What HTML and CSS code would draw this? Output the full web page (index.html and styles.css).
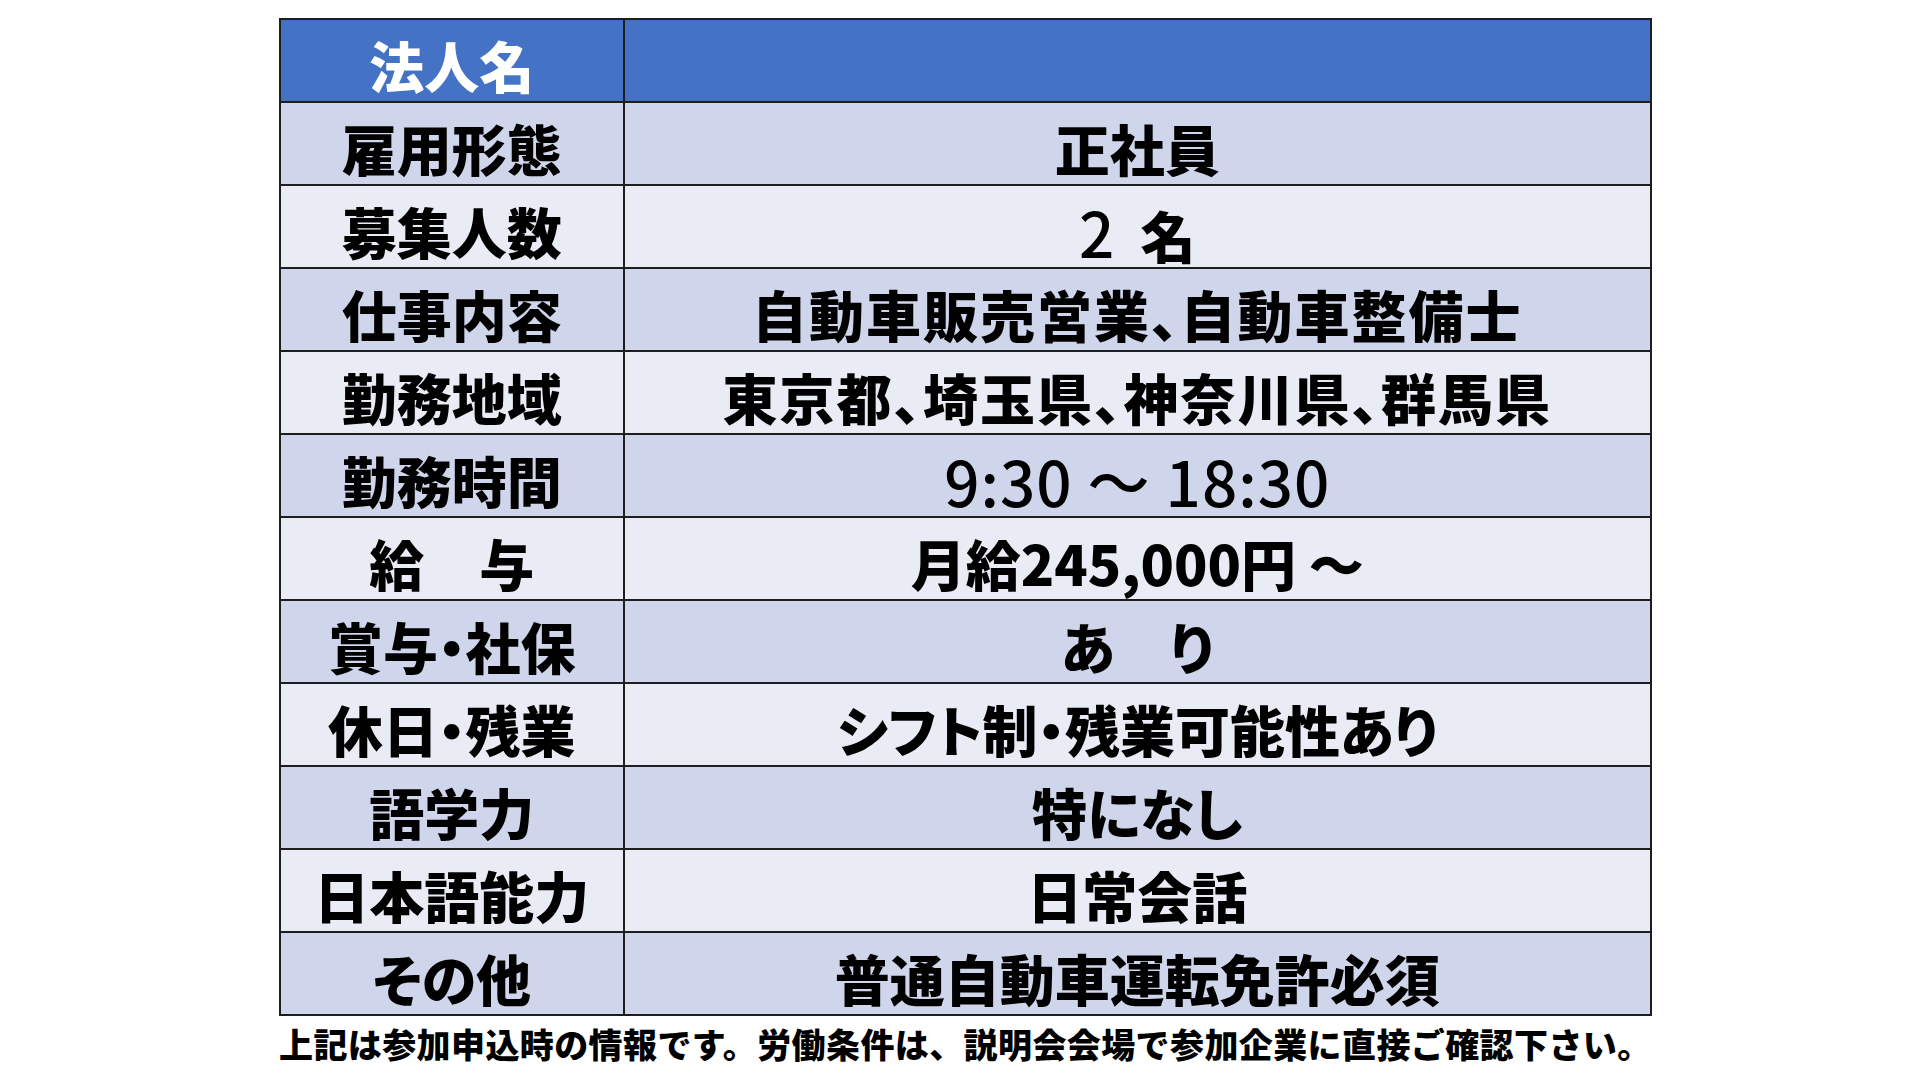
FILE: index.html
```html
<!DOCTYPE html>
<html lang="ja">
<head>
<meta charset="utf-8">
<title>求人情報</title>
<link rel="stylesheet" href="styles.css">
</head>
<body>
<main class="page">
  <table class="job">
    <tr class="head">
      <th class="label">法人名</th>
      <td class="value"></td>
    </tr>
    <tr class="dark">
      <th class="label">雇用形態</th>
      <td class="value">正社員</td>
    </tr>
    <tr class="light">
      <th class="label">募集人数</th>
      <td class="value"><span class="num">2</span>&nbsp;&nbsp;名</td>
    </tr>
    <tr class="dark">
      <th class="label">仕事内容</th>
      <td class="value spaced">自動車販売営業、自動車整備士</td>
    </tr>
    <tr class="light">
      <th class="label">勤務地域</th>
      <td class="value spaced">東京都、埼玉県、神奈川県、群馬県</td>
    </tr>
    <tr class="dark">
      <th class="label">勤務時間</th>
      <td class="value"><span class="num">9:30 ～ 18:30</span></td>
    </tr>
    <tr class="light">
      <th class="label">給　与</th>
      <td class="value">月給245,000円 ～</td>
    </tr>
    <tr class="dark">
      <th class="label">賞与・社保</th>
      <td class="value">あ　り</td>
    </tr>
    <tr class="light">
      <th class="label">休日・残業</th>
      <td class="value">シフト制・残業可能性あり</td>
    </tr>
    <tr class="dark">
      <th class="label">語学力</th>
      <td class="value">特になし</td>
    </tr>
    <tr class="light">
      <th class="label">日本語能力</th>
      <td class="value">日常会話</td>
    </tr>
    <tr class="dark">
      <th class="label">その他</th>
      <td class="value">普通自動車運転免許必須</td>
    </tr>
  </table>
  <p class="note">上記は参加申込時の情報です。労働条件は、説明会会場で参加企業に直接ご確認下さい。</p>
</main>
</body>
</html>
```

FILE: styles.css
```css
html, body {
  margin: 0;
  padding: 0;
  background: #ffffff;
}

body {
  font-family: "Noto Sans CJK JP", "Noto Sans", sans-serif;
  color: #000000;
}

.page {
  padding: 18px 0 0 279px;
}

.job {
  border-collapse: collapse;
  width: 1373px;
  border: 2px solid #1e1e1e;
}

.job th,
.job td {
  height: 83px;
  padding: 8px 0 0;
  border: 2px solid #1e1e1e;
  text-align: center;
  vertical-align: middle;
  font-size: 55px;
  font-weight: 900;
  line-height: 1;
  box-sizing: border-box;
  font-feature-settings: "palt";
}

.job .label {
  width: 344px;
}

.job .value {
  width: 1029px;
}

.job .spaced {
  letter-spacing: 2px;
}

.job .head {
  background: #4472c4;
}

.job .head th {
  color: #ffffff;
}

.job .dark {
  background: #cfd5ea;
}

.job .light {
  background: #e9ebf5;
}

.num {
  font-family: "Noto Sans CJK JP", sans-serif;
  font-weight: 500;
  font-size: 62px;
  letter-spacing: 1px;
}

.note {
  margin: 8px 0 0;
  font-size: 34px;
  font-weight: 900;
  line-height: 1.2;
  letter-spacing: 0.4px;
  white-space: nowrap;
}
```
